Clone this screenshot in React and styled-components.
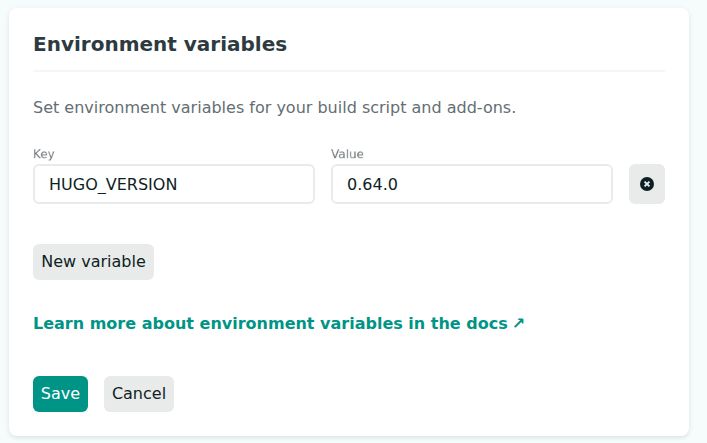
import React from 'react';
import styled, { createGlobalStyle } from 'styled-components';

const Global = createGlobalStyle`
  * { box-sizing: border-box; }
  body { margin: 0; background: #f6fbfc; font-family: "DejaVu Sans", sans-serif; font-size: 16px; line-height: 24px; color: #0e1e25; overflow: hidden; }
`;
const Page = styled.main`
  height: 443px;
  padding: 8px 18px 7px 9px;
`;
const Card = styled.section`
  height: 428px;
  padding: 24px;
  background: #fff;
  border-radius: 8px;
  box-shadow: 0 2px 4px rgba(14, 30, 37, 0.08), 0 1px 8px rgba(14, 30, 37, 0.03);
`;
const Title = styled.h2`
  margin: 0;
  height: 40px;
  border-bottom: 2px solid #f6f6f6;
  font-size: 20px;
  line-height: 24px;
  font-weight: 700;
  color: #2d3b41;
`;
const Description = styled.p`
  margin: 24px 0 0;
  color: #646e73;
`;
const Fields = styled.div`
  display: flex;
  align-items: flex-end;
  gap: 16px;
  margin-top: 25px;
`;
const Field = styled.label`
  display: block;
  width: 282px;
`;
const FieldName = styled.span`
  display: block;
  height: 19px;
  line-height: 24px;
  color: #6e777b;
  transform: translateY(0.5px) scale(0.75);
  transform-origin: 0 0;
  will-change: transform;
`;
const Input = styled.input`
  display: block;
  width: 100%;
  height: 40px;
  padding: 0 14px;
  border: 2px solid #e9ebea;
  border-radius: 6px;
  font: 16px "DejaVu Sans", sans-serif;
  color: #0e1e25;
  outline: none;
`;
const Button = styled.button`
  height: ${(p) => p.$height || 36}px;
  width: ${(p) => p.$width}px;
  padding: ${(p) => (p.$icon ? '0' : '0 0 2px')};
  display: flex;
  align-items: center;
  justify-content: center;
  border: 0;
  border-radius: 6px;
  background: ${(p) => (p.$primary ? '#009486' : '#e9ebea')};
  color: ${(p) => (p.$primary ? '#fff' : '#0e1e25')};
  font: 16px "DejaVu Sans", sans-serif;
  white-space: nowrap;
`;
const AddRow = styled.div`
  margin-top: 40px;
`;
const DocsLink = styled.a`
  display: block;
  margin-top: 32px;
  font-weight: 700;
  color: #009486;
  text-decoration: none;
`;
const Arrow = styled.span`
  margin-left: -1.5px;
`;
const Actions = styled.div`
  display: flex;
  gap: 16px;
  margin-top: 40px;
`;

const RemoveIcon = () => (
  <svg width="14" height="14" viewBox="0 0 14 14" aria-hidden="true">
    <circle cx="7" cy="7" r="7" fill="#0e1e25" />
    <path d="M4.6 4.6l4.8 4.8M9.4 4.6L4.6 9.4" stroke="#e9ebea" strokeWidth="2" />
  </svg>
);

export default function App() {
  return (
    <>
      <Global />
      <Page>
        <Card>
          <Title>Environment variables</Title>
          <Description>Set environment variables for your build script and add-ons.</Description>
          <Fields>
            <Field><FieldName>Key</FieldName><Input defaultValue="HUGO_VERSION" /></Field>
            <Field><FieldName>Value</FieldName><Input defaultValue="0.64.0" /></Field>
            <Button $icon $width={36} $height={40} aria-label="Remove variable"><RemoveIcon /></Button>
          </Fields>
          <AddRow><Button $width={121}>New variable</Button></AddRow>
          <DocsLink href="#docs">Learn more about environment variables in the docs <Arrow>↗</Arrow></DocsLink>
          <Actions>
            <Button $primary $width={55}>Save</Button>
            <Button $width={70}>Cancel</Button>
          </Actions>
        </Card>
      </Page>
    </>
  );
}
